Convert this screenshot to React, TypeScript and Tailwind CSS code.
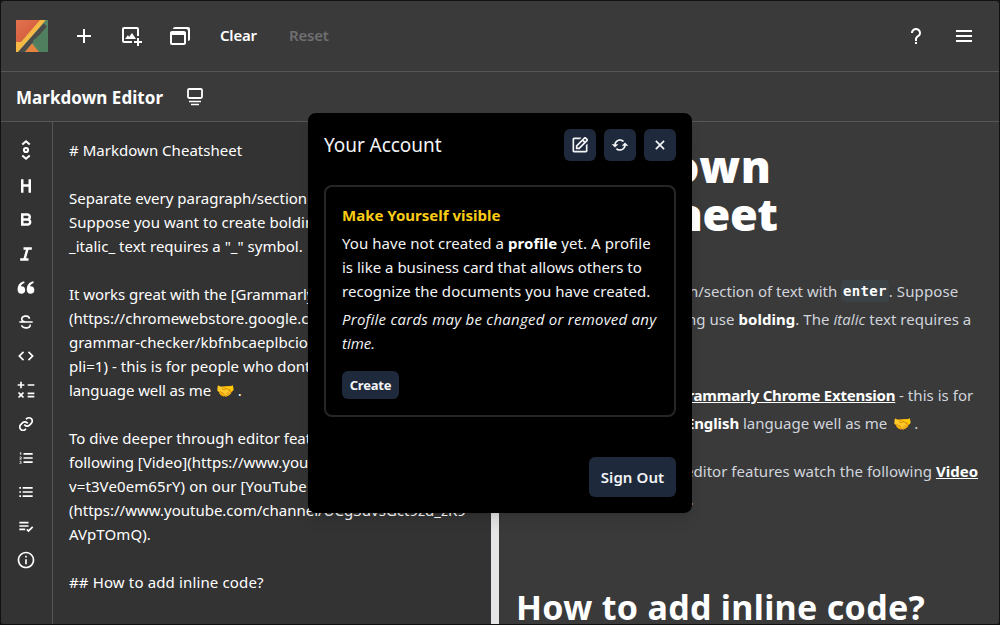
import React from "react";
import {
  BiPlus,
  BiImageAdd,
  BiWindows,
  BiQuestionMark,
  BiMenu,
  BiHeading,
  BiBold,
  BiItalic,
  BiSolidQuoteAltLeft,
  BiStrikethrough,
  BiCode,
  BiMath,
  BiLink,
  BiListOl,
  BiListUl,
  BiListCheck,
  BiInfoCircle,
  BiEdit,
  BiRefresh,
  BiX,
} from "react-icons/bi";

function Logo() {
  return (
    <svg viewBox="0 0 32 32" className="size-8">
      <defs>
        <linearGradient id="red" x1="0" y1="0" x2="1" y2="1">
          <stop offset="0" stopColor="#e2724f" />
          <stop offset="1" stopColor="#cf5535" />
        </linearGradient>
      </defs>
      <rect width="32" height="32" fill="#568565" />
      <path d="M0 0H25L5 22H0Z" fill="url(#red)" />
      <path d="M24 0H30L3 31V32H0V22H5Z" fill="#f6b945" />
      <path d="M28 3L31.500 6L8.500 32H2Z" fill="#4b4b4b" />
      <path d="M30 0H32V8L27.500 3Z" fill="#568565" />
      <path d="M32 8V32H23L17 20.500Z" fill="#4f7f5f" />
      <path d="M16 23.500L23 32H9Z" fill="#e5843f" />
    </svg>
  );
}

function Carousel() {
  return (
    <svg viewBox="0 0 24 24" className="ml-5 size-6" fill="none" stroke="currentColor">
      <rect x="5" y="4" width="14" height="9" rx="1.200" strokeWidth="1.800" />
      <path d="M6 16.500H18M8 19.500H16" strokeWidth="1.700" />
    </svg>
  );
}

function ScrollSync() {
  return (
    <svg viewBox="0 0 24 24" className="size-6" fill="none" stroke="currentColor" strokeWidth="2.400">
      <path d="M7.500 5.500L12 1.500l4.500 4M7.500 18.500l4.500 4 4.500-4" />
      <circle cx="12" cy="12" r="2.500" />
    </svg>
  );
}

function Handshake() {
  return <span className="mr-[3px] ml-[2px] inline-block w-[18px] font-['Noto_Color_Emoji',sans-serif] text-[15px] leading-none">🤝</span>;
}

const tools = [
  ScrollSync,
  BiHeading,
  BiBold,
  BiItalic,
  BiSolidQuoteAltLeft,
  BiStrikethrough,
  BiCode,
  BiMath,
  BiLink,
  BiListOl,
  BiListUl,
  BiListCheck,
  BiInfoCircle,
];

function Source() {
  return (
    <div className="w-[438px] shrink-0 overflow-hidden bg-[#333333] px-4 pt-4 text-[15px] leading-6 whitespace-pre text-white">
      <div className="tracking-[0.03px]"># Markdown Cheatsheet</div>
      <div> </div>
      <div className="tracking-[-0.01px]">Separate every paragraph/section of text with</div>
      <div className="tracking-[0.04px]">Suppose you want to create bolding use</div>
      <div className="tracking-[0.02px]">_italic_ text requires a "_" symbol.</div>
      <div> </div>
      <div className="tracking-[-0.06px]">It works great with the [Grammarly Chrome</div>
      <div>(https://chromewebstore.google.com/detail/</div>
      <div>grammar-checker/kbfnbcaeplbcioakkpcpgfkobkghlhen</div>
      <div className="tracking-[0.06px]">pli=1) - this is for people who dont know</div>
      <div>
        <span className="tracking-[-0.1px]">language well as me </span>
        <Handshake />.
      </div>
      <div> </div>
      <div>To dive deeper through editor features watch</div>
      <div>following [Video](https://www.youtube.com</div>
      <div className="tracking-[0.1px]">v=t3Ve0em65rY) on our [YouTube channel]</div>
      <div>(https://www.youtube.com/channel/UCg3uvsGct9zd_zK9</div>
      <div className="tracking-[0.1px]">AVpTOmQ).</div>
      <div> </div>
      <div className="tracking-[0.14px]">## How to add inline code?</div>
    </div>
  );
}

function Preview() {
  return (
    <div className="min-w-0 flex-1 overflow-hidden bg-[#3a3a3b] pl-[17px] text-[15px] leading-7 whitespace-nowrap text-[#d1d5db]">
      <h1 className="mt-[20px] text-[45px] leading-[48px] font-black text-white">
        <span className="tracking-[0.7px]">Markdown</span>
        <br />
        <span className="tracking-[-0.4px]">Cheatsheet</span>
      </h1>
      <div className="mt-[39px]">
        <p className="flex h-7 items-center whitespace-pre">
          <span className="tracking-[-0.01px]">Separate every paragraph/section of text with </span>
          <code className="flex h-[22px] items-center rounded bg-[#3c4347] px-[2px] font-['DejaVu_Sans_Mono',monospace] text-[14px] leading-none font-bold tracking-[0.3px] text-white">enter</code>
          <span className="tracking-[0.1px]">. Suppose</span>
        </p>
        <p className="tracking-[0.04px]">
          you want to create bolding use <b className="text-white">bolding</b>. The <i className="font-['Open_Sans',sans-serif]">italic</i> text requires a
        </p>
        <p>"_" symbol.</p>
      </div>
      <div className="mt-5">
        <p className="tracking-[-0.1px]">
          It works great with the <b className="tracking-[-0.22px] text-white underline">Grammarly Chrome Extension</b> <span className="tracking-[0.04px]">- this is for</span>
        </p>
        <p>
          people who dont know <b className="ml-[5px] tracking-[-0.1px] text-white">English</b> <span className="tracking-[0.02px]">language well as me </span>
          <Handshake />.
        </p>
      </div>
      <div className="mt-5">
        <p className="tracking-[0.02px]">
          To dive deeper through editor features watch the following <b className="text-white underline">Video</b>
        </p>
        <p className="tracking-[0.12px]">on our YouTube channel.</p>
      </div>
      <h2 className="mt-[74px] text-[34px] leading-10 font-bold tracking-[0.3px] text-white">How to add inline code?</h2>
    </div>
  );
}

function AccountDialog() {
  return (
    <div className="absolute top-[113px] left-[308px] flex h-[400px] w-[384px] flex-col rounded-lg bg-black p-4 text-[15px] leading-6 whitespace-nowrap text-[#f3f4f6] shadow-lg">
      <div className="flex h-8 items-center">
        <h2 className="mr-auto pt-px text-[19px] leading-[31px] tracking-[-0.05px]">Your Account</h2>
        <div className="flex gap-2">
          {[BiEdit, BiRefresh, BiX].map((Icon, i) => (
            <button key={i} className="flex size-8 items-center justify-center rounded-md bg-[#1e293b]">
              <Icon className="size-5" />
            </button>
          ))}
        </div>
      </div>
      <div className="mt-6 h-[232px] rounded-lg border-2 border-[#262626] px-4 pt-4">
        <h3 className="font-bold text-[#facc15]">Make Yourself visible</h3>
        <p className="mt-1">
          <span className="tracking-[0.06px]">
            You have not created a <b className="text-white">profile</b> yet. A profile
          </span>
          <br />
          is like a business card that allows others to
          <br />
          <span className="tracking-[0.03px]">recognize the documents you have created.</span>
        </p>
        <p className="mt-1 font-['Open_Sans',sans-serif] italic">
          <span className="tracking-[0.25px]">Profile cards may be changed or removed any</span>
          <br />
          time.
        </p>
        <button className="mt-4 flex h-7 w-[57px] items-center justify-center rounded-md bg-[#1e293b] text-[13px] font-bold tracking-[-0.2px]">Create</button>
      </div>
      <button className="mt-auto h-10 w-[87px] self-end rounded-md bg-[#1e293b] font-semibold tracking-[0.1px]">Sign Out</button>
    </div>
  );
}

export default function App() {
  return (
    <div className="relative h-[625px] w-[1000px] overflow-hidden bg-[#111111] p-px font-['Noto_Sans',sans-serif]">
      <div className="flex h-full flex-col overflow-hidden rounded-[3px] bg-[#3a3a3b] text-white">
        <header className="flex h-[71px] shrink-0 items-center border-b border-[#565657] pl-[15px] text-[15px] font-semibold">
          <Logo />
          <BiPlus className="ml-6 size-6" />
          <BiImageAdd className="ml-6 size-6" />
          <BiWindows className="ml-6 size-6" />
          <span className="ml-7 w-[37px] pb-px tracking-[-0.2px]">Clear</span>
          <span className="ml-8 pb-px tracking-[-0.2px] text-[#6f6f70]">Reset</span>
          <BiQuestionMark className="ml-auto size-6" />
          <BiMenu className="mr-[23px] ml-6 size-6" />
        </header>
        <div className="flex h-[50px] shrink-0 items-center border-b border-[#565657] pl-[15px]">
          <h1 className="w-[147px] pt-[3px] text-[17px] font-bold tracking-[0.05px] whitespace-nowrap">Markdown Editor</h1>
          <Carousel />
        </div>
        <main className="flex min-h-0 flex-1">
          <nav className="flex w-[52px] shrink-0 flex-col items-center gap-[14px] border-r border-[#565657] bg-[#333333] pt-[18px] pr-px">
            {tools.map((Icon, i) => (
              <span key={i} className="flex size-5 items-center justify-center first:mb-[2px]">
                <Icon className="size-5 shrink-0" />
              </span>
            ))}
          </nav>
          <Source />
          <div className="w-2 shrink-0 bg-[#e5e5e7]" />
          <Preview />
        </main>
      </div>
      <AccountDialog />
    </div>
  );
}
